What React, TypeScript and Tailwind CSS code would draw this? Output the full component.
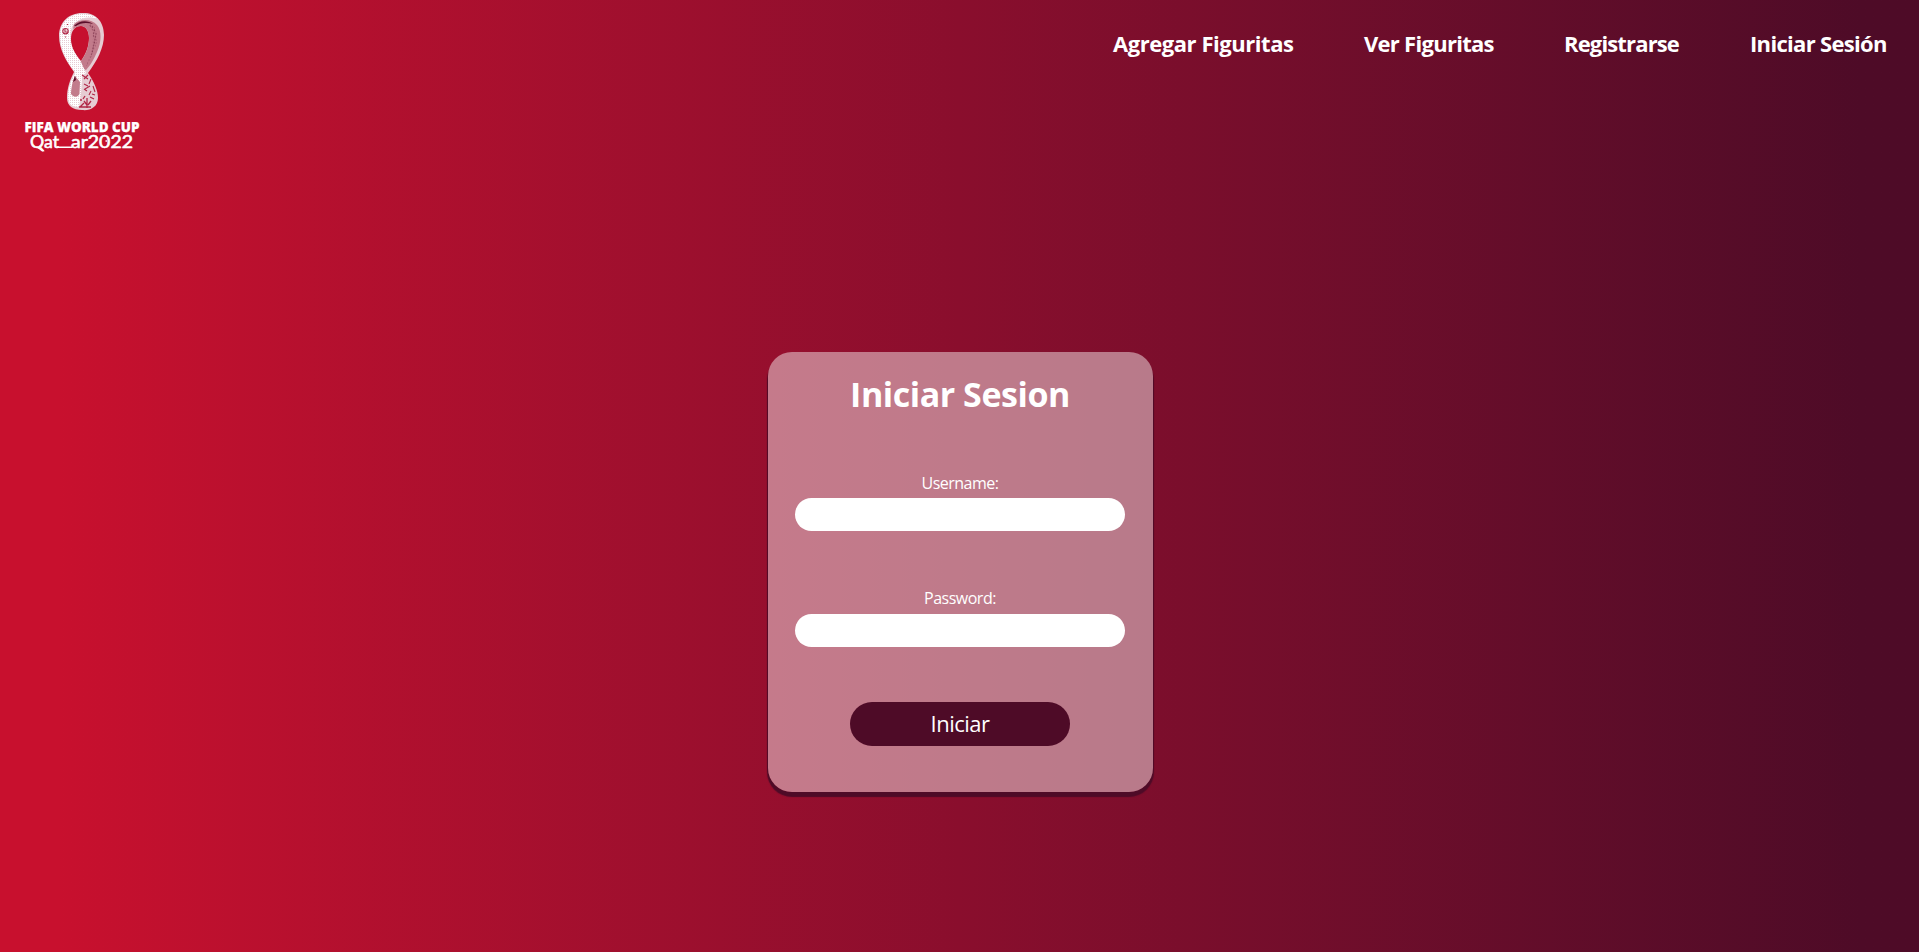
const NAV = [
  { label: "Agregar Figuritas", style: "w-[180px] tracking-[-0.45px]" },
  { label: "Ver Figuritas", style: "w-[129px] tracking-[-0.72px]" },
  { label: "Registrarse", style: "w-[115px] tracking-[-0.85px]" },
  { label: "Iniciar Sesión", style: "w-[136px] tracking-[-0.68px]" },
];

function Logo() {
  return (
    <svg className="block" width="160" height="160" viewBox="0 0 160 160" aria-label="FIFA World Cup Qatar 2022">
      <defs>
        <pattern id="weave" width="2" height="2" patternUnits="userSpaceOnUse">
          <rect width="2" height="2" fill="#fff" />
          <rect width="1" height="1" fill="#e6ccd3" />
        </pattern>
        <pattern id="dots" width="2.5" height="3" patternUnits="userSpaceOnUse" patternTransform="rotate(12)">
          <circle cx="1" cy="1" r=".65" fill="#5c0f2b" />
        </pattern>
      </defs>
      <path fill="#e6ccd3" fillRule="evenodd" d="M82 13C94 12 104 20 104 35C104 48 97 61 88 73C94 82 98 90 98 98C98 107 90 111 82 110C73 110 67 106 67 98C67 88 70 80 74 72C66 61 59 49 59 36C59 22 69 13 82 13ZM81 26C74 26 71 32 71 39C71 47 75 54 81 61C86 54 89 46 89 38C89 31 86 26 81 26Z" />
      <path fill="#c27b8b" d="M74 24C80 19 91 18 97 25C102 31 101.500 42 97 52C94 59 90 66 86 70C83 69 81 65 81 61C87 53 89 45 89 38C89 31 86 26 81 26C78 26 76 27 73 29Z" />
      <path fill="url(#dots)" d="M91 24C97 27 98 37 96 45L89 62L86 67C90 57 93 48 93 38C93 31 92 27 87 24Z" />
      <path fill="url(#weave)" d="M66 20C71 15 77 13.500 83 14C89 14 94 15.500 98 19C91 16.500 82 17 76 22C71 26 70 31 70.500 39C71 48 76 55 81 62L86 73C82 76 78 76 75 72C66 61 60 48 60 36C60 29 62 24 66 20Z" />
      <path fill="url(#weave)" d="M75 73L82 72C82 84 81 96 79 107C71 107 68 103 68 97C68 89 71 80 75 73Z" />
      <path fill="#c27b8b" d="M75 76C72 82 71 90 71 94C74 98 78 97 79.500 94L80 82Z" />
      <path fill="#5c0f2b" d="M75 75.500L73 82L76 80ZM74 26C79 20 88 20 93 24C86 22 80 23 76 26Z" />
      <g fill="none" stroke="#b02747" strokeWidth="1.1">
        <circle cx="65.500" cy="31.200" r="2.700" />
        <path d="M65 29v3h3M65 37h1M67 24.500h1M82 75l6 4m0-4-4 4m7 0-2 5m-5 0 4 2m-3 3 5-3m1 5-2 4m4-9 2 6m-8-1-3-2m8 5 3 1" />
        <path strokeWidth="1.300" d="M80 107l4-4m3-5v10m4-7-3 4m-4-4 3 4m-8 2h12m-8-8 2-3m5 1 4 2m-14 1h2" />
      </g>
      <text x="24.500" y="132" textLength="115" lengthAdjust="spacingAndGlyphs" fill="#fff" stroke="#fff" strokeWidth=".25" fontFamily="'Open Sans', sans-serif" fontSize="13.500" fontWeight="800">FIFA WORLD CUP</text>
      <g fill="#fff" stroke="#fff" strokeWidth=".55" fontFamily="Lato, sans-serif" fontSize="16.500" fontWeight="400">
        <text x="30" y="147.800" textLength="29" lengthAdjust="spacingAndGlyphs">Qat</text>
        <text x="71" y="147.800" textLength="62" lengthAdjust="spacingAndGlyphs">ar2022</text>
      </g>
      <path d="M57 147.200h15M38 147.500l5.500 3.500M105.500 141h1.500" fill="none" stroke="#fff" strokeWidth="1.600" />
    </svg>
  );
}

function Field({ label, type, className }: { label: string; type: string; className: string }) {
  return (
    <label className={`flex w-[330px] flex-col items-center ${className}`}>
      <span className="h-6 text-base leading-6 tracking-[-0.5px]">{label}</span>
      <input type={type} className="h-[33px] w-full rounded-full bg-white px-4 text-black outline-none" />
    </label>
  );
}

export default function App() {
  return (
    <div className="flex h-[952px] w-full flex-col items-center overflow-hidden bg-linear-to-r from-[#c8102e] from-3% via-[#8a0e2d] to-[#4e0b27] to-97% font-['Open_Sans','Noto_Sans',sans-serif] text-white">
      <header className="flex h-[160px] w-full shrink-0 items-start justify-between pr-[33px]">
        <Logo />
        <nav className="flex gap-[71px] pt-[27px]">
          {NAV.map((item) => (
            <a key={item.label} href="#" className={`text-[22px] leading-8 font-bold whitespace-nowrap ${item.style}`}>
              {item.label}
            </a>
          ))}
        </nav>
      </header>
      <main className="mt-[192px] ml-px flex h-[440px] w-[385px] shrink-0 flex-col items-center rounded-[24px] bg-[#f4e6e8]/50 shadow-[0_4px_1px_1px_#4e0b27]">
        <h1 className="mt-[18px] h-12 text-[34px] leading-[48px] font-bold tracking-[-0.45px] whitespace-nowrap">Iniciar Sesion</h1>
        <Field label="Username:" type="text" className="mt-[53px] gap-[3px]" />
        <Field label="Password:" type="password" className="mt-[55px] gap-1" />
        <button type="button" className="mt-[55px] h-11 w-[220px] rounded-full bg-[#4e0b27] pb-0.5 text-[22px] leading-[42px] tracking-[-0.5px]">
          Iniciar
        </button>
      </main>
    </div>
  );
}
